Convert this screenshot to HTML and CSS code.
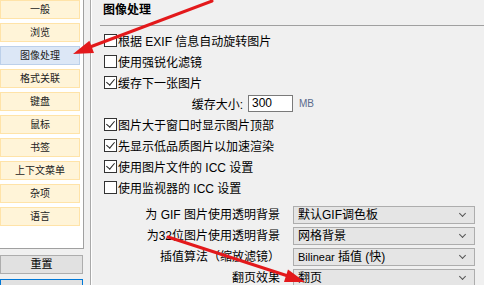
FILE: index.html
```html
<!doctype html>
<html>
    <head>
        <meta charset="utf-8">
        <link rel="stylesheet" href="styles.css">
    </head>
    <body>
        <div id="window">
            <div id="side">
                <ul id="pages">
                    <li>一般</li>
                    <li>浏览</li>
                    <li class="current">图像处理</li>
                    <li>格式关联</li>
                    <li>键盘</li>
                    <li>鼠标</li>
                    <li>书签</li>
                    <li>上下文菜单</li>
                    <li>杂项</li>
                    <li>语言</li>
                </ul>
                <div class="button">重置</div>
                <div class="button default"></div>
            </div>

            <div id="page">
                <h1>图像处理</h1>
                <div class="rule"></div>

                <div class="check"><span class="box"></span>根据 EXIF 信息自动旋转图片</div>
                <div class="check"><span class="box"></span>使用强锐化滤镜</div>
                <div class="check"><span class="box on"></span>缓存下一张图片</div>
                <div class="field">
                    <label>缓存大小:</label>
                    <span class="input">300</span>
                    <span class="unit">MB</span>
                </div>
                <div class="check"><span class="box on"></span>图片大于窗口时显示图片顶部</div>
                <div class="check"><span class="box on"></span>先显示低品质图片以加速渲染</div>
                <div class="check"><span class="box on"></span>使用图片文件的 ICC 设置</div>
                <div class="check"><span class="box"></span>使用监视器的 ICC 设置</div>

                <div class="choices">
                    <div class="choice">
                        <label>为 GIF 图片使用透明背景</label>
                        <span class="select">默认GIF调色板</span>
                    </div>
                    <div class="choice">
                        <label>为32位图片使用透明背景</label>
                        <span class="select">网格背景</span>
                    </div>
                    <div class="choice">
                        <label>插值算法（缩放滤镜）</label>
                        <span class="select"><small>Bilinear</small> 插值 (快)</span>
                    </div>
                    <div class="choice">
                        <label>翻页效果</label>
                        <span class="select">翻页</span>
                    </div>
                </div>
            </div>

            <!-- annotation arrows drawn over the screenshot -->
            <svg id="arrows" width="484" height="285" viewBox="0 0 484 285">
                <line x1="212" y1="1" x2="90" y2="47" />
                <polygon points="73,54 94,53 89.4,40.8" />
                <line x1="168" y1="237" x2="288" y2="276" />
                <polygon points="305,282 284,282 288,269.6" />
            </svg>
        </div>
    </body>
</html>
```

FILE: styles.css
```css
* {
    margin: 0;
    padding: 0;
    box-sizing: border-box;
}
body {
    width: 484px;
    height: 285px;
    overflow: hidden;
    background-color: #F0F0F0;
    color: #000;
    font-family: "Liberation Sans", "Noto Sans CJK SC", sans-serif;
    font-size: 12px;
}
#window {
    position: relative;
    display: flex;
    height: 285px;
    overflow: hidden;
}

/* left column */
#side {
    flex: none;
    width: 84px;
    display: flex;
    flex-direction: column;
}
#side > * {
    flex: none;
}
#pages {
    list-style: none;
    height: 249px;
    padding-right: 3px;
    background-color: #FFF;
    border-right: 1px solid #A0A0A0;
    border-bottom: 1px solid #A0A0A0;
    display: flex;
    flex-direction: column;
    gap: 4px;
}
#pages li {
    height: 19px;
    line-height: 17px;
    text-align: center;
    font-size: 10px;
    background-color: #FFF4D8;
    border: 1px solid #FFE3A8;
    color: #222;
}
#pages li.current {
    background-color: #DCE7F6;
    border-color: #BCD0EA;
}
.button {
    width: 83px;
    height: 19px;
    margin-top: 6px;
    line-height: 17px;
    text-align: center;
    font-size: 11px;
    background-color: #E1E1E1;
    border: 1px solid #ADADAD;
}
.button.default {
    margin-top: 5px;
    height: 22px;
    border-color: #0078D7;
}

/* right page */
#page {
    flex: 1;
    margin-left: 6px;
    padding-left: 12px;
    border-left: 1px solid #A9A9A9;
    box-shadow: inset 1px 0 #FFF;
}
h1 {
    height: 25px;
    line-height: 20px;
    font-size: 12px;
    font-weight: bold;
}
.rule {
    margin-left: -3px;
    margin-bottom: 4px;
    border-top: 1px solid #A0A0A0;
}
.check {
    height: 21px;
    display: flex;
    align-items: center;
    padding-left: 1px;
}
.box {
    position: relative;
    width: 13px;
    height: 13px;
    margin-right: 1px;
    background-color: #FFF;
    border: 1px solid #333;
}
.box.on::after {
    content: "";
    position: absolute;
    left: 3px;
    top: 0px;
    width: 4px;
    height: 7px;
    border-right: 1px solid #222;
    border-bottom: 1px solid #222;
    transform: rotate(40deg);
}
.field {
    height: 21px;
    display: flex;
    align-items: center;
}
.field label {
    width: 140px;
    text-align: right;
}
.input {
    width: 45px;
    height: 17px;
    margin-left: 5px;
    padding-left: 3px;
    line-height: 15px;
    background-color: #FFF;
    border: 1px solid #7A7A7A;
}
.unit {
    margin-left: 6px;
    font-size: 10px;
    color: #5B6B8C;
}
.choices {
    margin-top: 6px;
}
.choice {
    height: 21px;
    display: flex;
    align-items: center;
}
.choice label {
    width: 177px;
    line-height: 12px;
    text-align: right;
}
.select {
    position: relative;
    width: 182px;
    height: 18px;
    margin-left: 13px;
    padding-left: 4px;
    line-height: 16px;
    background-color: #E5E5E5;
    border: 1px solid #ADADAD;
}
.select::after {
    content: "";
    position: absolute;
    right: 9px;
    top: 4px;
    width: 4px;
    height: 4px;
    border-right: 1px solid #555;
    border-bottom: 1px solid #555;
    transform: rotate(45deg);
}
.select small {
    font-size: 11px;
}

#arrows {
    position: absolute;
    left: 0;
    top: 0;
    pointer-events: none;
}
#arrows line {
    stroke: #E3191B;
    stroke-width: 3;
    stroke-linecap: round;
}
#arrows polygon {
    fill: #E3191B;
}
```
